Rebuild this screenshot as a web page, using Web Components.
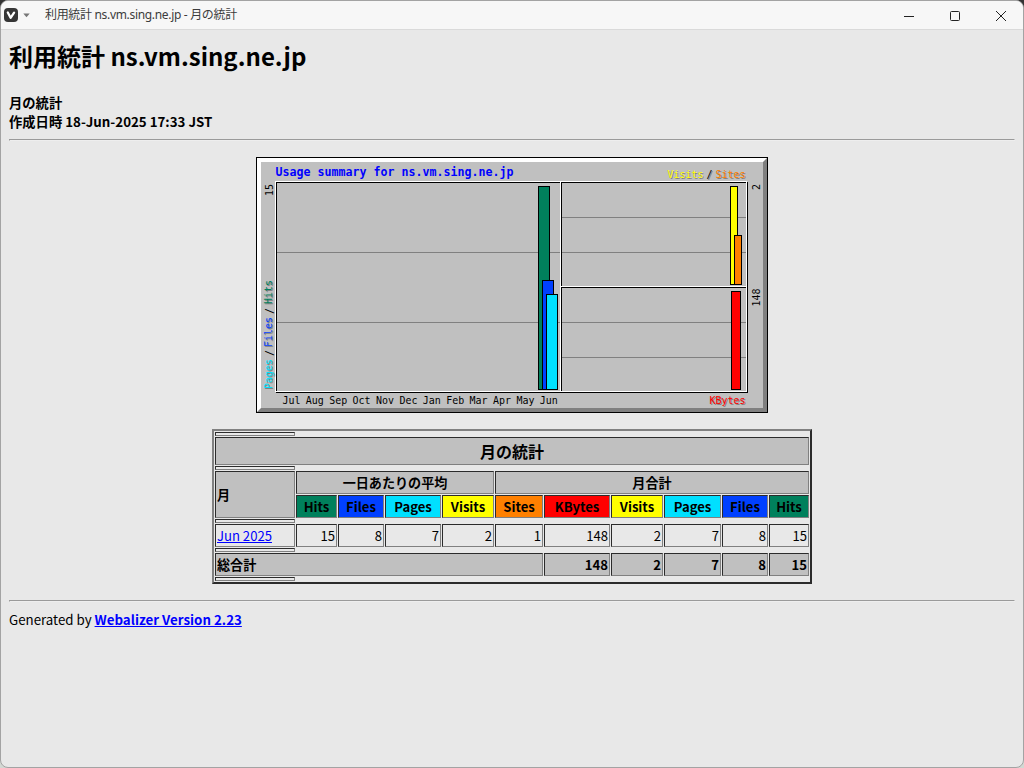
<!DOCTYPE html>
<html lang="ja">
<head>
<meta charset="utf-8">
<title>利用統計 ns.vm.sing.ne.jp - 月の統計</title>
<style>
  body {
    margin: 0;
    height: 768px;
    overflow: hidden;
    background: linear-gradient(#333 50%, #d3d8d3 50%);
    font-family: 'Noto Sans CJK JP', sans-serif;
    color: #000;
  }
</style>
</head>
<body>
<app-window>
  <title-bar slot="bar">利用統計 ns.vm.sing.ne.jp - 月の統計</title-bar>
  <report-header>
    <span slot="title">利用統計 ns.vm.sing.ne.jp</span>
    <span slot="period">月の統計</span>
    <span slot="created">作成日時 18-Jun-2025 17:33 JST</span>
  </report-header>
  <rule-line></rule-line>
  <usage-chart></usage-chart>
  <usage-table></usage-table>
  <rule-line></rule-line>
  <report-footer>Generated by <a slot="link" href="#">Webalizer Version 2.23</a></report-footer>
</app-window>

<script>
const COLORS = {
  hits: '#00805c',
  files: '#0040ff',
  pages: '#00e0ff',
  visits: '#ffff00',
  sites: '#ff8000',
  kbytes: '#ff0000'
};

class AppWindow extends HTMLElement {
  constructor() {
    super();
    this.attachShadow({ mode: 'open' });
    this.shadowRoot.innerHTML = `
    <style>
      :host {
        box-sizing: border-box;
        display: flex;
        flex-direction: column;
        width: 1024px;
        height: 768px;
        border: 1px solid #a3a3a3;
        border-radius: 8px;
        overflow: hidden;
        background: #e8e8e8;
      }

      main {
        flex: 1;
        display: flex;
        flex-direction: column;
        padding: 8px;
      }
    </style>
    <slot name="bar"></slot>
    <main><slot></slot></main>
    `;
  }
}

class TitleBar extends HTMLElement {
  constructor() {
    super();
    this.attachShadow({ mode: 'open' });
    this.shadowRoot.innerHTML = `
    <style>
      :host {
        box-sizing: border-box;
        display: flex;
        align-items: center;
        height: 29px;
        padding-left: 3px;
        border-bottom: 1px solid #dadada;
        background: #f7f7f7;
        color: #3c3c3c;
        font: 12px/28px 'Noto Sans', 'Noto Sans CJK JP', sans-serif;
      }

      svg {
        display: block;
        flex: none;
      }

      .caret {
        margin: 1px 15px 0 5px;
      }

      .title {
        flex: 1;
        white-space: nowrap;
        letter-spacing: -0.32px;
      }

      .controls {
        display: flex;
        margin-right: -1px;
      }
    </style>
    <svg width="14" height="14" viewBox="0 0 14 14">
      <rect x="0" y="0" width="14" height="14" rx="4" fill="#363636"/>
      <path d="M3.8 4.5 L6.6 9.8 L10.1 4.6" fill="none" stroke="#fff" stroke-width="2.3" stroke-linecap="round" stroke-linejoin="round"/>
    </svg>
    <svg class="caret" width="7" height="5" viewBox="0 0 7 5"><path d="M0.3 0.5H6.7L3.5 4.2Z" fill="#777"/></svg>
    <span class="title"><slot></slot></span>
    <div class="controls">
      <svg width="46" height="28" viewBox="0 0 46 28"><path d="M18 15.5H28" stroke="#222"/></svg>
      <svg width="46" height="28" viewBox="0 0 46 28"><rect x="18.5" y="10.5" width="9" height="9" rx="1" fill="none" stroke="#222"/></svg>
      <svg width="46" height="28" viewBox="0 0 46 28"><path d="M18 10L28 20M28 10L18 20" stroke="#222"/></svg>
    </div>
    `;
  }
}

class RuleLine extends HTMLElement {
  constructor() {
    super();
    this.attachShadow({ mode: 'open' });
    this.shadowRoot.innerHTML = `
    <style>
      :host {
        display: block;
      }

      hr {
        margin: 0;
        border: 1px inset;
        color: gray;
      }
    </style>
    <hr>
    `;
  }
}

class ReportHeader extends HTMLElement {
  constructor() {
    super();
    this.attachShadow({ mode: 'open' });
    this.shadowRoot.innerHTML = `
    <style>
      :host {
        display: block;
        height: 101px;
      }

      h2 {
        margin: 0 0 20px;
        font-size: 24px;
        line-height: 35px;
      }

      div {
        font-size: 13.3px;
        font-weight: bold;
        line-height: 19px;
      }
    </style>
    <h2><slot name="title"></slot></h2>
    <div><slot name="period"></slot></div>
    <div><slot name="created"></slot></div>
    `;
  }
}

class ReportFooter extends HTMLElement {
  constructor() {
    super();
    this.attachShadow({ mode: 'open' });
    this.shadowRoot.innerHTML = `
    <style>
      :host {
        display: block;
        margin-top: 8px;
        font-size: 13.3px;
        line-height: 19px;
      }

      ::slotted(a) {
        color: #0000ff;
        font-weight: bold;
      }
    </style>
    <slot></slot><slot name="link"></slot>
    `;
  }
}

class UsageChart extends HTMLElement {
  constructor() {
    super();
    this.attachShadow({ mode: 'open' });
    this.shadowRoot.innerHTML = `
    <style>
      :host {
        display: block;
        width: 512px;
        height: 256px;
        margin: 16px auto;
      }

      svg {
        display: block;
      }

      text {
        font-family: 'DejaVu Sans Mono', monospace;
        font-size: 10.6px;
        white-space: pre;
      }

      .heading {
        font-size: 11.8px;
        font-weight: bold;
      }
    </style>
    <svg width="512" height="256" viewBox="0 0 512 256">${this.frame()}${this.bars()}${this.labels()}</svg>
    `;
  }

  line(x1, y1, x2, y2, color) {
    return `<rect x="${x1}" y="${y1}" width="${x2 - x1 + 1}" height="${y2 - y1 + 1}" fill="${color}"/>`;
  }

  box(x1, y1, x2, y2, fill, stroke) {
    return `<rect x="${x1 + 0.5}" y="${y1 + 0.5}" width="${x2 - x1}" height="${y2 - y1}" fill="${fill}" stroke="${stroke}"/>`;
  }

  // gd fonts advance 6px a character (7px for the heading)
  text(x, y, str, { color = '#000', shadow = false, up = false, step = 6, cls = '' } = {}) {
    const draw = (dx, dy, fill) => {
      const px = x + dx;
      const py = y + dy;
      const turn = up ? ` transform="rotate(-90 ${px} ${py})"` : '';
      return `<text class="${cls}" x="${px}" y="${py}" fill="${fill}" textLength="${str.length * step}" lengthAdjust="spacingAndGlyphs"${turn}>${str}</text>`;
    };
    return (shadow ? draw(1, 1, '#808080') : '') + draw(0, 0, color);
  }

  frame() {
    return `
      <rect width="512" height="256" fill="#000"/>
      <rect x="1" y="1" width="510" height="254" fill="#808080"/>
      <path d="M1 1H511L507 5H5V251L1 255Z" fill="#fff"/>
      <rect x="5" y="5" width="502" height="246" fill="#c0c0c0"/>`
      + this.line(21, 95, 303, 95, '#808080')
      + this.line(21, 165, 303, 165, '#808080')
      + [60, 95, 165, 200].map(y => this.line(306, y, 489, y, '#808080')).join('')
      + this.box(20, 25, 491, 235, 'none', '#000')
      + this.line(305, 25, 305, 235, '#000')
      + this.line(305, 130, 491, 130, '#000')
      + this.box(19, 24, 490, 234, 'none', '#fff')
      + this.line(304, 25, 304, 234, '#fff')
      + this.line(304, 129, 490, 129, '#fff');
  }

  bars() {
    return this.box(282, 29, 293, 232, COLORS.hits, '#000')
      + this.box(286, 123, 297, 232, COLORS.files, '#000')
      + this.box(290, 137, 301, 232, COLORS.pages, '#000')
      + this.box(474, 29, 481, 127, COLORS.visits, '#000')
      + this.box(478, 78, 485, 127, COLORS.sites, '#000')
      + this.box(475, 134, 484, 232, COLORS.kbytes, '#000');
  }

  labels() {
    const months = ['Jul', 'Aug', 'Sep', 'Oct', 'Nov', 'Dec', 'Jan', 'Feb', 'Mar', 'Apr', 'May', 'Jun'];
    return this.text(19.5, 19, 'Usage summary for ns.vm.sing.ne.jp', { color: '#0000ff', step: 7, cls: 'heading' })
      + months.map((m, i) => this.text(26.4 + i * 23.4, 247, m)).join('')
      + this.text(17, 39, '15', { up: true })
      + this.text(16, 232, 'Pages', { up: true, color: COLORS.pages, shadow: true })
      + this.text(17, 199, '/', { up: true })
      + this.text(16, 190, 'Files', { up: true, color: COLORS.files, shadow: true })
      + this.text(17, 157, '/', { up: true })
      + this.text(16, 147, 'Hits', { up: true, color: COLORS.hits, shadow: true })
      + this.text(411.5, 21, 'Visits', { color: COLORS.visits, shadow: true })
      + this.text(450.5, 21, '/', { shadow: true })
      + this.text(459.5, 21, 'Sites', { color: COLORS.sites, shadow: true })
      + this.text(504, 33, '2', { up: true })
      + this.text(504, 149.5, '148', { up: true })
      + this.text(453.5, 247, 'KBytes', { color: COLORS.kbytes, shadow: true });
  }
}

class UsageTable extends HTMLElement {
  constructor() {
    super();
    this.attachShadow({ mode: 'open' });
    const widths = [80, 41, 46, 56, 52, 48, 66, 52, 57, 46, 40];
    const heads = ['Hits', 'Files', 'Pages', 'Visits', 'Sites', 'KBytes', 'Visits', 'Pages', 'Files', 'Hits'];
    const june = [15, 8, 7, 2, 1, 148, 2, 7, 8, 15];
    const totals = [148, 2, 7, 8, 15];
    const spacer = '<tr class="spacer"><th></th></tr>';
    this.shadowRoot.innerHTML = `
    <style>
      :host {
        display: block;
        width: 600px;
        margin: 0 auto 16px;
      }

      table {
        box-sizing: border-box;
        width: 600px;
        table-layout: fixed;
        border: 2px solid;
        border-color: #808080 #2b2b2b #2b2b2b #808080;
        border-spacing: 1px;
      }

      th, td {
        box-sizing: border-box;
        height: 23px;
        padding: 1px;
        border: 1px solid;
        border-color: #2b2b2b #808080 #808080 #2b2b2b;
        font-size: 13.1px;
        line-height: 19px;
        white-space: nowrap;
      }

      td {
        text-align: right;
      }

      .left {
        text-align: left;
      }

      .spacer th {
        height: 4px;
        padding: 0;
        font-size: 0;
        line-height: 0;
      }

      .grey {
        background: #c0c0c0;
      }

      .caption {
        height: 28px;
        font-size: 16px;
        line-height: 24px;
      }

      a {
        color: #0000ff;
      }
    </style>
    <table>
      <colgroup>${widths.map(w => `<col style="width:${w}px">`).join('')}</colgroup>
      ${spacer}
      <tr><th class="grey caption" colspan="11">月の統計</th></tr>
      ${spacer}
      <tr>
        <th class="grey left" rowspan="2">月</th>
        <th class="grey" colspan="4">一日あたりの平均</th>
        <th class="grey" colspan="6">月合計</th>
      </tr>
      <tr>${heads.map(h => `<th style="background:${COLORS[h.toLowerCase()]}">${h}</th>`).join('')}</tr>
      ${spacer}
      <tr><td class="left"><a href="#">Jun 2025</a></td>${june.map(n => `<td>${n}</td>`).join('')}</tr>
      ${spacer}
      <tr>
        <th class="grey left" colspan="6">総合計</th>
        ${totals.map(n => `<th class="grey" style="text-align:right">${n}</th>`).join('')}
      </tr>
      ${spacer}
    </table>
    `;
  }
}

customElements.define('app-window', AppWindow);
customElements.define('title-bar', TitleBar);
customElements.define('rule-line', RuleLine);
customElements.define('report-header', ReportHeader);
customElements.define('report-footer', ReportFooter);
customElements.define('usage-chart', UsageChart);
customElements.define('usage-table', UsageTable);
</script>
</body>
</html>
